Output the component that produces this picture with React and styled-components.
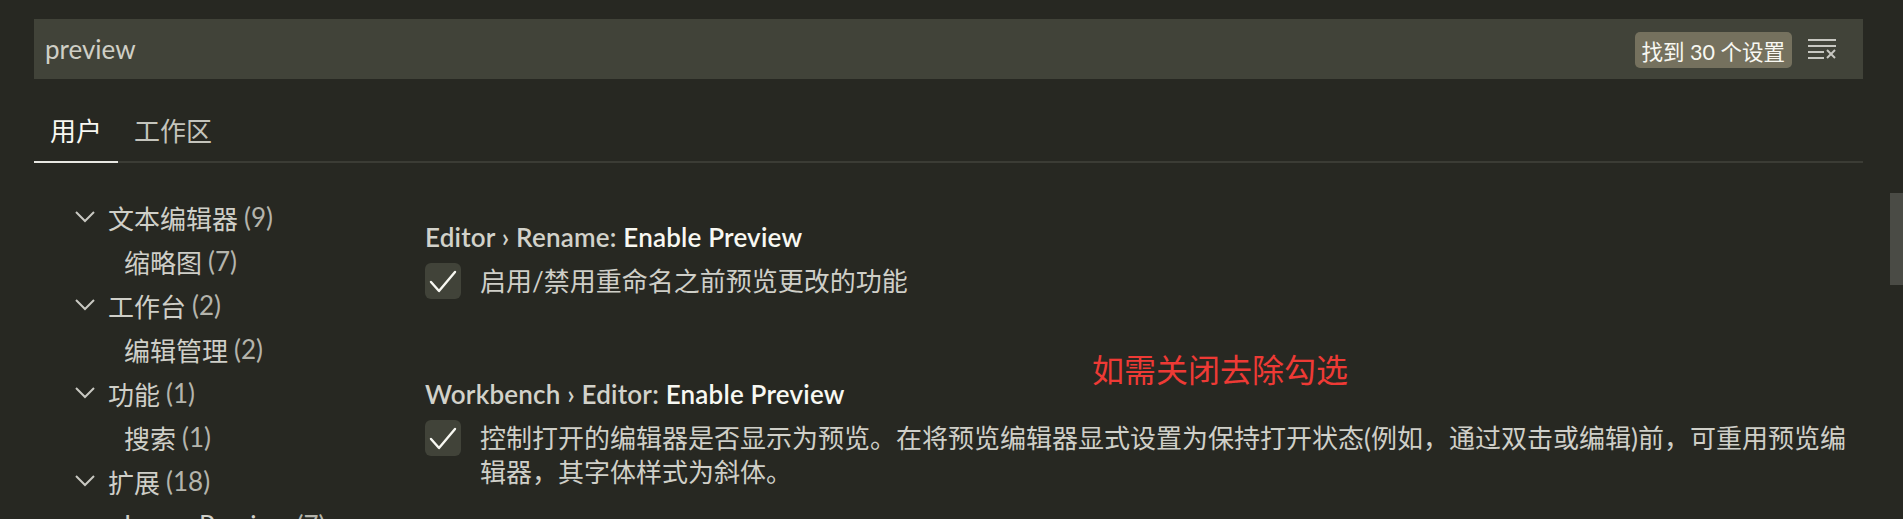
import React from 'react'
import styled, {createGlobalStyle} from 'styled-components'

const GlobalStyle = createGlobalStyle`
    html, body {
        margin: 0;
        padding: 0;
        background: #272822;
    }
    body {
        font-family: Lato, "Noto Sans CJK SC", sans-serif;
        color: #cfcfc8;
    }
`

const Page = styled.div`
    position: relative;
    width: 1903px;
    height: 519px;
    overflow: hidden;
    box-sizing: border-box;
    padding: 19px 40px 0 34px;
    background: #272822;
`

const SearchBar = styled.div`
    height: 60px;
    display: flex;
    align-items: center;
    padding: 0 27px 0 11px;
    background: #414339;
`

const SearchText = styled.div`
    flex: 1;
    font-size: 26px;
    color: #cfcfc6;
`

const Badge = styled.div`
    height: 36px;
    display: flex;
    align-items: center;
    padding: 0 7px;
    margin: 2px 16px 0 0;
    border-radius: 5px;
    background: #75715e;
    color: #f8f8f2;
    font-size: 21.5px;
    white-space: nowrap;
`

const TabBar = styled.div`
    display: flex;
    margin-top: 22px;
    border-bottom: 2px solid #3b3c35;
`

const Tab = styled.div`
    height: 60px;
    line-height: 60px;
    padding: 0 16px;
    margin-bottom: -2px;
    font-size: 26px;
    color: ${p => (p.$active ? '#f8f8f2' : '#c4c4bc')};
    border-bottom: 2px solid ${p => (p.$active ? '#e7e7e2' : 'transparent')};
`

const Body = styled.div`
    display: flex;
`

const Toc = styled.div`
    width: 391px;
    flex-shrink: 0;
    padding-top: 32px;
`

const TocRow = styled.div`
    height: 44px;
    display: flex;
    align-items: center;
    padding-left: ${p => (p.$child ? 90 : 41)}px;
    font-size: 26px;
    color: #cfcfc8;
    white-space: nowrap;
`

const Chevron = styled.svg`
    width: 20px;
    height: 12px;
    margin-right: 13px;
    flex-shrink: 0;
`

const Count = styled.span`
    margin-left: 6px;
    color: #b4b4ac;
`

const SettingsList = styled.div`
    flex: 1;
    padding-top: 36px;
`

const SettingItem = styled.div`
    padding: 20px 0 57px;
`

const SettingTitle = styled.div`
    font-size: 26px;
    line-height: 36px;
    font-weight: 600;
    letter-spacing: 0.2px;
    white-space: nowrap;
`

const Category = styled.span`
    color: #d2d2ca;
`

const Label = styled.span`
    color: #f8f8f2;
`

const ValueRow = styled.div`
    display: flex;
    align-items: flex-start;
    margin-top: 8px;
`

const CheckBox = styled.div`
    width: 36px;
    height: 36px;
    flex-shrink: 0;
    border-radius: 6px;
    background: #414339;
    margin-right: 19px;
    display: flex;
    align-items: center;
    justify-content: center;
`

const Description = styled.div`
    flex: 1;
    font-size: 26px;
    line-height: 34px;
    margin-top: 1px;
    color: #cfcfc8;
`

const Note = styled.div`
    position: absolute;
    left: 1092px;
    top: 350px;
    font-size: 32px;
    line-height: 36px;
    color: #ee3a35;
    font-family: "Noto Sans CJK SC", sans-serif;
    white-space: nowrap;
`

const ScrollThumb = styled.div`
    position: absolute;
    right: 0;
    top: 193px;
    width: 13px;
    height: 92px;
    background: #4a4b45;
`

const ClearAllIcon = () => (
    <svg width="28" height="22" viewBox="0 0 28 22" fill="none" stroke="#c8c8c2" strokeWidth="2">
        <line x1="0" y1="2" x2="28" y2="2"/>
        <line x1="0" y1="8" x2="28" y2="8"/>
        <line x1="0" y1="14" x2="16" y2="14"/>
        <line x1="0" y1="20" x2="16" y2="20"/>
        <line x1="19" y1="12" x2="27" y2="20"/>
        <line x1="27" y1="12" x2="19" y2="20"/>
    </svg>
)

const ChevronDown = () => (
    <Chevron viewBox="0 0 20 12" fill="none" stroke="#c8c8c2" strokeWidth="2">
        <polyline points="1,1 10,10 19,1"/>
    </Chevron>
)

const Check = () => (
    <svg width="36" height="36" viewBox="0 0 36 36" fill="none" stroke="#f8f8f2" strokeWidth="2.4"
         strokeLinecap="round" strokeLinejoin="round">
        <polyline points="6,19 14,28 30,9"/>
    </svg>
)

const tocItems = [
    {name: '文本编辑器', count: 9},
    {name: '缩略图', count: 7, child: true},
    {name: '工作台', count: 2},
    {name: '编辑管理', count: 2, child: true},
    {name: '功能', count: 1},
    {name: '搜索', count: 1, child: true},
    {name: '扩展', count: 18},
    {name: 'Image Preview', count: 7, child: true},
]

const settings = [
    {
        category: 'Editor › Rename: ',
        label: 'Enable Preview',
        text: '启用/禁用重命名之前预览更改的功能',
    },
    {
        category: 'Workbench › Editor: ',
        label: 'Enable Preview',
        text: '控制打开的编辑器是否显示为预览。在将预览编辑器显式设置为保持打开状态(例如，通过双击或编辑)前，可重用预览编辑器，其字体样式为斜体。',
    },
]

const App = () => {
    return (
        <Page>
            <GlobalStyle/>
            <SearchBar>
                <SearchText>preview</SearchText>
                <Badge>找到 30 个设置</Badge>
                <ClearAllIcon/>
            </SearchBar>
            <TabBar>
                <Tab $active>用户</Tab>
                <Tab>工作区</Tab>
            </TabBar>
            <Body>
                <Toc>
                    {tocItems.map((item, i) => (
                        <TocRow key={i} $child={item.child}>
                            {!item.child && <ChevronDown/>}
                            {item.name}
                            <Count>({item.count})</Count>
                        </TocRow>
                    ))}
                </Toc>
                <SettingsList>
                    {settings.map((s, i) => (
                        <SettingItem key={i}>
                            <SettingTitle>
                                <Category>{s.category}</Category>
                                <Label>{s.label}</Label>
                            </SettingTitle>
                            <ValueRow>
                                <CheckBox><Check/></CheckBox>
                                <Description>{s.text}</Description>
                            </ValueRow>
                        </SettingItem>
                    ))}
                </SettingsList>
            </Body>
            <Note>如需关闭去除勾选</Note>
            <ScrollThumb/>
        </Page>
    )
}

export default App
